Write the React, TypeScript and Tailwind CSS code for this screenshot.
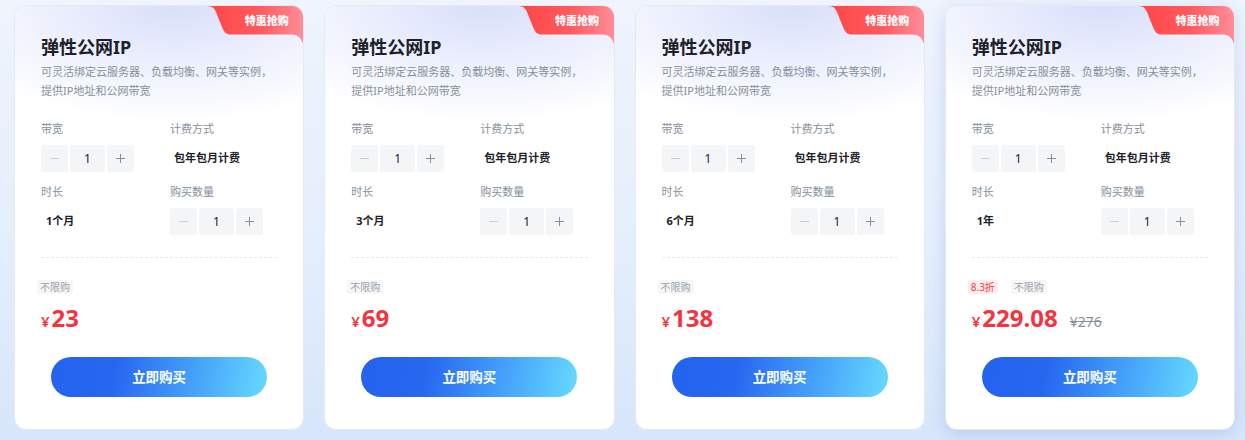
import React from "react";

type Card = {
  duration: string;
  price: string;
  original?: string;
  discount?: string;
  active?: boolean;
};

const cards: Card[] = [
  { duration: "1个月", price: "23" },
  { duration: "3个月", price: "69" },
  { duration: "6个月", price: "138" },
  { duration: "1年", price: "229.08", original: "276", discount: "8.3折", active: true },
];

function Stepper() {
  return (
    <div className="flex h-[27px] gap-[2px]">
      <div className="flex w-[27px] items-center justify-center rounded-[3px] bg-[#f4f5f6]">
        <div className="h-[1px] w-[9px] bg-[#c9cdd4]" />
      </div>
      <div className="flex w-[35px] items-center justify-center rounded-[3px] bg-[#f4f5f6] text-[12px] text-[#1d2129]">
        1
      </div>
      <div className="relative flex w-[27px] items-center justify-center rounded-[3px] bg-[#f4f5f6]">
        <div className="absolute h-[1px] w-[9px] bg-[#86909c]" />
        <div className="absolute h-[9px] w-[1px] bg-[#86909c]" />
      </div>
    </div>
  );
}

function Badge() {
  return (
    <div className="absolute right-0 top-0 h-[38px] w-[95px]">
      <svg width="95" height="38" viewBox="0 0 95 38" className="absolute inset-0">
        <defs>
          <linearGradient id="bg" x1="0" y1="0" x2="1" y2="0">
            <stop offset="0" stopColor="#ff4646" />
            <stop offset="0.55" stopColor="#ff5a5f" />
            <stop offset="1" stopColor="#ff8d99" />
          </linearGradient>
        </defs>
        <path
          d="M0 0 H95 V38 C93 32 90 28.5 84 28.5 H23 C18 28.5 16 26 14 21 L8 6 C6.5 2 4 0 0 0 Z"
          fill="url(#bg)"
        />
      </svg>
      <div className="absolute left-[22px] right-0 top-[8px] text-center text-[11px] font-black leading-[14px] text-white">
        特惠抢购
      </div>
    </div>
  );
}

function PriceCard({ c }: { c: Card }) {
  return (
    <div
      className={
        "relative flex-1 overflow-hidden rounded-[12px] border border-[#e4e9f2] bg-white " +
        (c.active ? "shadow-[0_4px_16px_rgba(70,120,210,0.22)]" : "")
      }
    >
      <div className="absolute inset-x-0 top-0 h-[125px] bg-[radial-gradient(85%_115px_at_55%_0%,#d9dffb_0%,#eceffd_50%,#ffffff_100%)]" />
      <Badge />
      <div className="relative pb-[32px] pt-[29px]">
        <div className="pl-[26px] pr-[20px]">
          <div className="text-[18px] font-bold leading-[24px] text-[#1d2129]">弹性公网IP</div>
          <div className="mt-[3px] whitespace-nowrap text-[11px] leading-[19px] text-[#86909c]">
            可灵活绑定云服务器、负载均衡、网关等实例，
            <br />
            提供IP地址和公网带宽
          </div>
          <div className="mt-[20px] grid grid-cols-[129px_1fr]">
            <div>
              <div className="text-[11px] leading-[18px] text-[#86909c]">带宽</div>
              <div className="mt-[7px]">
                <Stepper />
              </div>
            </div>
            <div>
              <div className="text-[11px] leading-[18px] text-[#86909c]">计费方式</div>
              <div className="mt-[7px] flex h-[27px] items-center pl-[4px] text-[11px] font-bold text-[#1d2129]">
                包年包月计费
              </div>
            </div>
            <div className="mt-[11px]">
              <div className="text-[11px] leading-[18px] text-[#86909c]">时长</div>
              <div className="mt-[7px] flex h-[27px] items-center pl-[5px] text-[11px] font-bold text-[#1d2129]">
                {c.duration}
              </div>
            </div>
            <div className="mt-[11px]">
              <div className="text-[11px] leading-[18px] text-[#86909c]">购买数量</div>
              <div className="mt-[7px]">
                <Stepper />
              </div>
            </div>
          </div>
        </div>
        <div className="mx-[26px] mt-[22px] border-t border-dashed border-[#e5e8ed]" />
        <div className="pl-[22px]">
          <div className="mt-[22px] flex gap-[13px]">
            {c.discount && (
              <span className="rounded-[3px] bg-[#ffecec] px-[3px] text-[10px] leading-[14px] text-[#f53f3f]">
                {c.discount}
              </span>
            )}
            <span className="rounded-[3px] bg-[#f5f6f7] px-[3px] text-[10px] leading-[14px] text-[#9ba1a9]">
              不限购
            </span>
          </div>
          <div className="ml-[4px] mt-[8px] flex h-[32px] items-baseline">
            <span className="text-[15px] font-semibold text-[#f5333f]">¥</span>
            <span className="ml-[2px] text-[24px] font-bold leading-[32px] text-[#f5333f]">{c.price}</span>
            {c.original && (
              <span className="ml-[12px] text-[14px] text-[#86909c] line-through">¥{c.original}</span>
            )}
          </div>
        </div>
        <div className="mx-auto mt-[23px] flex h-[40px] w-[216px] items-center justify-center rounded-full bg-[linear-gradient(100deg,#2463ee_0%,#2767f0_30%,#49a8fb_70%,#66dafe_100%)] text-[13.5px] font-bold text-white">
          立即购买
        </div>
      </div>
    </div>
  );
}

export default function App() {
  return (
    <div
      className="h-[440px] w-[1245px] overflow-hidden bg-[linear-gradient(180deg,#eff4fd_0%,#e6effc_50%,#d7e6fb_100%)] pl-[14px] pr-[10px] pt-[5px]"
      style={{ fontFamily: '"Noto Sans", "Noto Sans CJK SC", sans-serif' }}
    >
      <div className="flex gap-[20px]">
        {cards.map((c, i) => (
          <PriceCard key={i} c={c} />
        ))}
      </div>
    </div>
  );
}
